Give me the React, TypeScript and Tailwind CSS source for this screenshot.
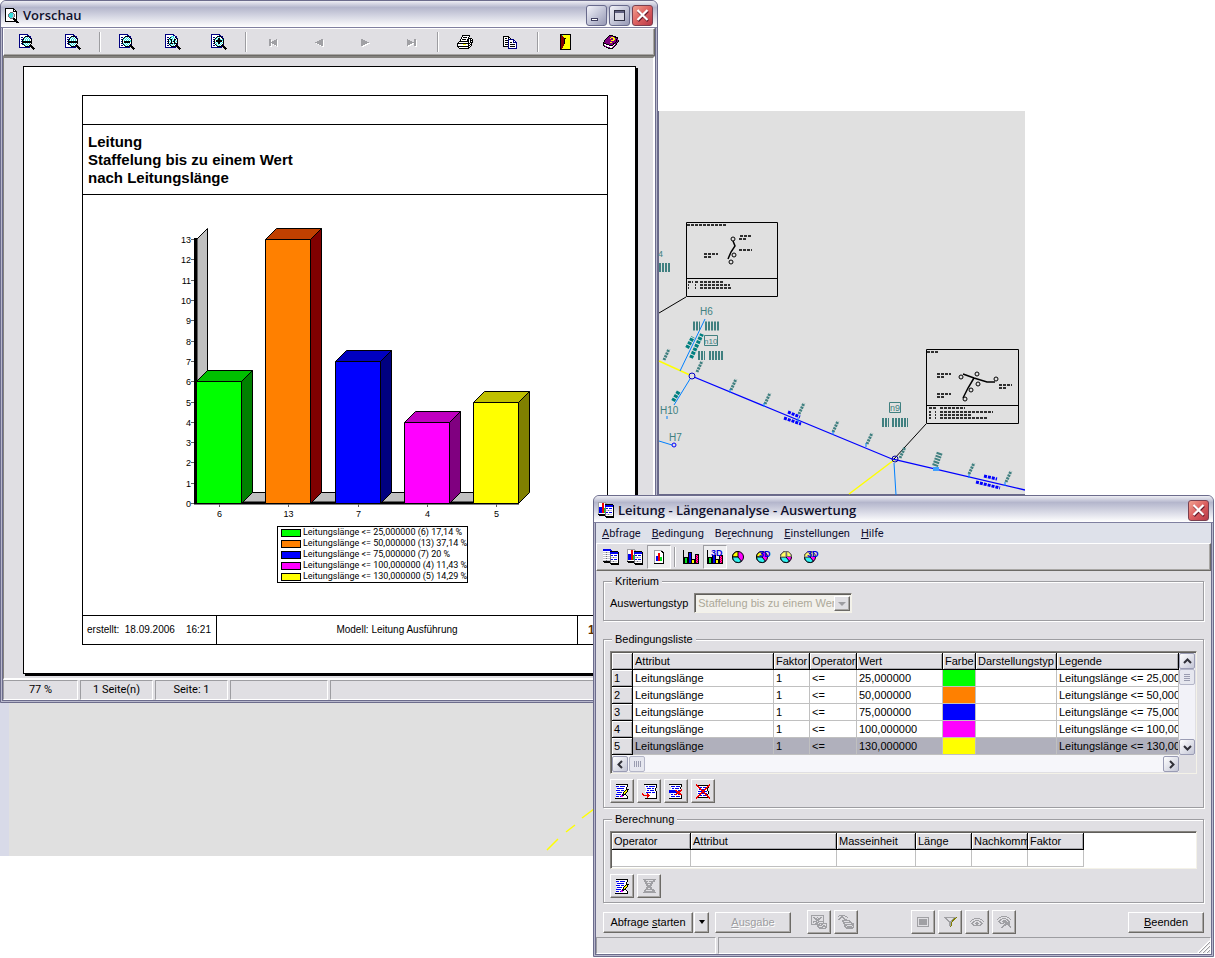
import type { ReactNode } from 'react'
import clsx from 'clsx'

const palette: Record<string, string> = {
  k: '#000000', w: '#ffffff', B: '#000080', b: '#0000f0', c: '#30e0e0', g: '#a0a0a4', G: '#00e020',
  r: '#f00000', R: '#800000', y: '#ffff00', m: '#ff00ff', p: '#800080', s: '#c8c8d0', o: '#808000', d: '#707078',
}

// Bitmap icons, one character per pixel
const icons = {
  zoomOut: [
    'BBBBBBBBB.......', 'BwwwwwwwBB......', 'BwwwwwkkkkBB....', 'BwBBwkcwcwkB....', 'BwwwkcwcwcwkB...', 'BwBBkwcwcwcwk...',
    'BwwkcwcwcwcwK...', 'BwBkkkkkkkkkk...', 'BwwkkkkkkkkkK...', 'BwBkcwcwcwcwk...', 'BwwBkcwcwcwk....', 'BwwwwkcwcwkkK...',
    'BwwwwwkkkkBkkk..', 'BBBBBBBBBBB.kkk.', '.............kkk', '..............k.',
  ],
  zoomOutSmall: [
    'BBBBBBBBB.......', 'BwwwwwwwBB......', 'BwwwwwkkkkBB....', 'BwBBwkcwcwkB....', 'BwwwkcwcwcwkB...', 'BwBkcwcwcwcwk...',
    'BwwkwcwcwcwcK...', 'BwBkwkkkkkkcK...', 'BwwkwkkkkkkwK...', 'BwBkcwcwcwcwk...', 'BwwwkcwcwcwkB...', 'BwBBwkcwcwkkK...',
    'BwwwwwkkkkBkkk..', 'BBBBBBBBBBB.kkk.', '.............kkk', '..............k.',
  ],
  zoomFull: [
    'BBBBBBBBB.......', 'BwwwwwwwBB......', 'BwwwwwcccwBB....', 'BwBBwkcwcwkB....', 'BwwwkcwcwcwkB...', 'BwBkckkcwkkwk...',
    'BwwkwckwckcwK...', 'BwBkcwkckkwcK...', 'BwwkwckwwkcwK...', 'BwBkckkkckkkk...', 'BwwwkcwcwcwkB...', 'BwBBwkcwcwkkK...',
    'BwwwwwkkkkBkkk..', 'BBBBBBBBBBB.kkk.', '.............kkk', '..............k.',
  ],
  zoomIn: [
    'BBBBBBBBB.......', 'BwwwwwwwBB......', 'BwwwwwkkkkBB....', 'BwBBwkcwcwkB....', 'BwwwkcwkkwwkB...', 'BwBkcwckkcwck...',
    'BwwkwkkkkkkcK...', 'BwBkwkkkkkkwK...', 'BwwkcwckkcwcK...', 'BwBkwcwkkwcwk...', 'BwwwkcwcwcwkB...', 'BwBBwkcwcwkkK...',
    'BwwwwwkkkkBkkk..', 'BBBBBBBBBBB.kkk.', '.............kkk', '..............k.',
  ],
  preview: [
    'kkkkkkkkk.....', 'kwwwwwwwkk....', 'kwwwwwwwkwk...', 'kwwwwwwwkkkk..', 'kwwwwdddwwwk..', 'kwwwdcccdwwk..',
    'kwwdccccsdwk..', 'kwwdccccsdwk..', 'kwwdccccsdwk..', 'kwwwdccsdwwk..', 'kwwwwdddkkwk..', 'kwwwwwwwkkkk..',
    'kwwwwwwwwkkk..', 'kkkkkkkkkkkkk.', '...........kkk',
  ],
  first: ['gg.....g', 'gg...ggg', 'gg.ggggg', 'gggggggg', 'gg.ggggg', 'gg...ggg', 'gg.....g'],
  prev: ['......gg', '....gggg', '..gggggg', 'gggggggg', '..gggggg', '....gggg', '......gg'],
  next: ['gg......', 'gggg....', 'gggggg..', 'gggggggg', 'gggggg..', 'gggg....', 'gg......'],
  last: ['g......gg', 'ggg....gg', 'ggggg..gg', 'ggggggggg', 'ggggg..gg', 'ggg....gg', 'g......gg'],
  print: [
    '.....kkkkkkkk...', '.....kwwwwwwk...', '....kwkkkkwk....', '....kwwwwwwkkkk.', '...kwkkkkwkkwkwk', '...kwwwwwwkkwkkk',
    '..kkkkkkkkkkwkwk', '.kwwwwwwwwwkwkkk', 'kkkkkkkkkkkkkwk.', 'kwwwwwyyywwkwkk.', 'kwwwwwwwwwwkkwk.', 'kkkkkkkkkkkkwk..',
    '.kwwwwwwwwwkk...', '..kkkkkkkkkk....',
  ],
  copy: [
    'kkkkkk..........', 'kwwwwkk.........', 'kwkkwkwk........', 'kwwwwBBBBBB.....', 'kwkkkBwwwwBB....', 'kwwwwBwwwwBwB...',
    'kwkkkBwkkwBBBB..', 'kwwwwBwwwwwwwB..', 'kwkkkBwkkkkkwB..', 'kwwwwBwwwwwwwB..', 'kkkkkBwkkkkkwB..', '.....BwwwwwwwB..', '.....BBBBBBBBB..',
  ],
  door: [
    'kkkkkkkkkkk', 'kRcyyyyyyyk', 'kRRyyyyyyyk', 'kRRRyyyyyyk', 'kRRRkkyyyyk', 'kRRRkyyyyyk', 'kRRRkyyyyyk', 'kRRRkyyyyyk',
    'kRRRkyyyyyk', 'kRRRkyyyyyk', 'kRRRyyyyyyk', 'kRRRyyyyyyk', 'kRRyyyyyyyk', 'kRRyyyyyyyk', 'kRyyyyyyyyk', 'kkkkkkkkkkk',
  ],
  book: [
    '......kkkk......', '.....kppppkkk...', '....kpppyyypkkk.', '...kpppyppyyppk.', '..kpppppppyypkp.', '.kppppppyyyppkpk',
    '.kpppppppppppkpk', 'kppppppyypppkpk.', 'kkkpppppppkkpk..', 'kwwkkkppppkwpk..', 'kpwwwwkkkkwpk...', '.kppwwwwwwpk....',
    '...kkppwwpk.....', '.....kkkkk......',
  ],
  tables: [
    'bbbbbbbb........', 'bbbbbbbbb.......', 'wwwwwwwkkkkkkkk.', 'sssdsssbbbbbbbbk', 'wwwwwwwbbbbbbbbk', 'sssdsssdwwwwwwwk', 'wwwwwwwdbbwbbbwk',
    'sssdsssdwwwwwwwk', 'wwwwwwwdssdssswk', 'sssdsssdwwwwwwwk', 'wwwwwwwdbbwbbbwk', 'sssdsssdwwwwwwwk', 'kkkkkkkdssdssswk', '.kkkkkkdwwwwwwwk', '.......kkkkkkkkk', '........kkkkkkkk',
  ],
  chartTable: [
    'gggggggg........', 'gwwwrrwgg.......', 'gwwwrrwkkkkkkkk.', 'gwwwrrwbbbbbbbbk', 'gwwwrrwbbbbbbbbk', 'gbbbrrwdwwwwwwwk', 'gbbbrrGdbbwbbbwk',
    'gbbbrrGdwwwwwwwk', 'gbbbrrGdssdssswk', 'gbbbrrGdwwwwwwwk', 'gbbbrrGdbbwbbbwk', 'gwwwwwwdwwwwwwwk', 'kkkkkkkdssdssswk', '.kkkkkkdwwwwwwwk', '.......kkkkkkkkk', '........kkkkkkkk',
  ],
  chartPage: [
    'gggggggg..', 'gwwwwwwkk.', 'gwwwwwwwkk', 'gwwwrrwwwk', 'gwwwrrwwwk', 'gwwwrrwwwk', 'gwbbrrwwwk', 'gwbbrrGGwk', 'gwbbrrGGwk',
    'gwbbrrGGwk', 'gwbbrrGGwk', 'gwwwwwwwwk', 'gwwwwwwwwk', 'kkkkkkkkkk',
  ],
  bars: [
    'k...............', 'k...............', 'k....kkkk.......', 'k....kbbk.......', 'k....kbbk...kkkk', 'k....kbbk...kmrk', 'k....kbbk...krmk',
    'kkkkkkbbk...kmrk', 'kkGGkkbbk...krmk', 'kkGGkkbbkkkkkmrk', 'kkGGkkbbkyykkrmk', 'kkGGkkbbkyykkmrk', 'kkGGkkbbkyykkrmk', 'kkkkkkkkkkkkkkkk',
  ],
  barsLow: [
    'k...............', 'k...............', 'k...............', 'k...............', 'k...............', 'k....kkkk...kkkk', 'k....kbbk...kmrk',
    'kkkkkkbbk...krmk', 'kkGGkkbbk...kmrk', 'kkGGkkbbkkkkkrmk', 'kkGGkkbbkyykkmrk', 'kkGGkkbbkyykkrmk', 'kkGGkkbbkyykkmrk', 'kkkkkkkkkkkkkkkk',
  ],
  edit: [
    '.kkkkkkkkkkkk.', '.wwwwwwwwwwwk.', '.bbbwbbbbbwwk.', '..wwwwwwwwwk..', '..bbbbbbbwwk..', '.wwwwwwwwwwkkk', '.bbbbwbbbwkyk.', '.wwwwwwwwkyyk.',
    '..bbbbbwkyyk..', '..wwwwwwkyk...', '.bbbbbwkBkk...', '.wwwwwmBkwwk..', '.bbbwbmmwwwwk.', '.wwwwwwwwwwwk.', 'kkkkkkkkkkkkk.',
  ],
  insert: [
    '..kkkkkkkkkkkkk', '...wwwwwwwwwwwk', '...wbbwbbbbbbwk', '...wwwwwwwwwwwk', '....wbbbbwbbwk.', '....wwwwwwwwwk.', '....wbbwbbbbwk.', '...wwwwwwwwwwwk',
    '...wbbbbbwbbbwk', 'r....rwwwwwwwwk', 'rr...rrwwwwwwwk', '.rrrrrrrwwwwwwk', '.....rrwwwwwwwk', '.....rwwwwwwwwk', '...kkkkkkkkkkkk',
  ],
  removeRow: [
    'kkkkkkkkkkkkk.', '.wwwwwwwwwwwk.', '.wbbbbwbbbbwk.', '..wwwwwwwwwk..', '..wbbwbbbbwk..', '.wwwwwwwwwwwr.', 'bbbbbbrrwbbrr.', 'bbbbbbbrrrrr..', 'bbbbbbbbrrr...',
    '..wwwwwrrrrr..', '.wbbwbrrwbrrr.', '.wwwwwwwwwwwk.', '.wbbbbwbbbbwk.', '.wwwwwwwwwwwk.', 'kkkkkkkkkkkkk.',
  ],
  removeAll: [
    'r............r', 'rrkkkkkkkkkkrr', '.rrwwwwwwwwrr.', '.wrrbbwbbbrrk.', '..wrrwwwwrrk..', '..wbrrbbrrwk..', '..wwwrrrrwwk..', '.wbbbbrrbbbwk.',
    '.wwwwrrrrwwwk.', '.wbbrrbbrrbwk.', '..wrrwwwwrrk..', '..rrbbwbbbrr..', '.rrwwwwwwwwrr.', 'rrkkkkkkkkkkrr', 'r............r',
  ],
  removeOff: [
    'ggggggggggggg', '.gg.......gg.', '.gggg.gggggg.', '..gg....gg...', '..gggggggg...', '...gg..gg....', '...gggggg....', '....gggg.....',
    '...gggggg....', '...gg..gg....', '..ggggggggg..', '.gg......ggg.', '.ggggggggggg.', 'ggggggggggggg',
  ],
  exportOff: [
    'ggggggggggggg...', 'g...........g...', 'g.gg..g..gg.g...', 'g..ggg.ggg..g...', 'g...ggggg...g...', 'g....ggg....g...', 'g.gggg.gggggg...', 'g.g..ggg....g...',
    'g...ggg.gggggggg', 'ggggggggg.gg...g', '......ggggg.gg.g', '......gg...ggggg', '.......ggggg..gg', '........ggggggg.',
  ],
  printOff: [
    '.gggggg.........', 'g..gg..gg.......', '..gggg...g......', '.gg..gg.........', 'gg....ggg.......', '....gggggggg....', '....gg.....gg...', '.....ggggggggg..',
    '.....gg......ggg', '......gggggggggg', '......ggg.....gg', '......gg.ggggg.g', '.......ggggggggg', '........ggggggg.',
  ],
  box: [
    'gggggggggggg', 'g..........g', 'g.gggggggg.g', 'g.gggggggg.g', 'g.gggggggg.g', 'g.gggggggg.g', 'g.gggggggg.g', 'g.gggggggg.g', 'g..........g', 'gggggggggggg',
  ],
  filter: [
    'ggggggggggggo', '.gg......goo.', '..gg....goo..', '...gg..goo...', '....ggggo....', '.....ggo.....', '.....ggo.....', '.....ggo.....', '.....ggo.....', '......o......',
  ],
  eye: [
    '....gggggg....', '..gg......gg..', '.g...gggg...g.', 'g..gg....gg..g', '..gg..gg..gg..', '.gg..gggg..gg.', '..gg..gg..gg..', '...gggggggg...',
  ],
  eyeOff: [
    '....gggggg....', '..gg......gg..', '.g...gggg...g.', 'g..gg....gg..g', '..gg..ggg.gg..', '.gg..ggggg.gg.', '..gg..ggggggg.', '...gggg.ggggg.',
    '.......gggggg.', '......ggg..gg.', '.....gg.....gg', '....gg.......g',
  ],
}

type IconName = keyof typeof icons

function Pixels({ name }: { name: IconName }) {
  const rows = icons[name]
  const width = Math.max(...rows.map((r) => r.length))
  return (
    <svg width={width} height={rows.length} shapeRendering="crispEdges" className="shrink-0" aria-hidden="true">
      {rows.flatMap((row, y) =>
        [...row].map((ch, x) =>
          ch === '.' ? null : <rect key={`${x}-${y}`} x={x} y={y} width={1} height={1} fill={palette[ch] ?? '#000'} />,
        ),
      )}
    </svg>
  )
}

function Pie({ label, gap }: { label?: string; gap?: boolean }) {
  return (
    <svg width={16} height={16} viewBox="0 0 16 16" aria-hidden="true">
      <circle cx={7} cy={8} r={5.5} fill="#ff00ff" stroke="#000" />
      <path d="M7 8 V2.5 A5.5 5.5 0 0 0 1.5 8 Z" fill="#ffff00" stroke="#000" />
      <path d="M7 8 H1.5 A5.5 5.5 0 0 0 10.5 12.3 Z" fill="#30f0f0" stroke="#000" />
      {gap && <path d="M7 8 V2.5 A5.5 5.5 0 0 0 1.5 8 Z M7.5 2.5 A5.5 5.5 0 0 1 12.3 7.5 L8 7.5 Z" fill="#ffff60" stroke="#707070" />}
      {label && <text x={4} y={8} className="fill-[#0000e0] font-['Liberation_Sans',sans-serif] text-[9px] font-bold">{label}</text>}
    </svg>
  )
}

function CaptionButton({ kind }: { kind: 'Minimieren' | 'Maximieren' | 'Schließen' }) {
  const close = kind === 'Schließen'
  return (
    <button
      aria-label={kind}
      className={clsx(
        'flex h-[21px] w-[21px] items-center justify-center rounded-[3px] border',
        close ? 'border-[#7a4050] bg-linear-to-br from-[#f0a090] via-[#dc6060] to-[#b83848]' : 'border-[#686a8c] bg-linear-to-br from-[#f4f4fa] via-[#c4c6d8] to-[#9698b4]',
      )}
    >
      <svg width={15} height={15} viewBox="0 0 15 15" shapeRendering={close ? 'auto' : 'crispEdges'}>
        {kind === 'Minimieren' && <rect x={2.5} y={10.5} width={6} height={2} fill="#fff" stroke="#404060" />}
        {kind === 'Maximieren' && (
          <>
            <rect x={2.5} y={2.5} width={10} height={10} fill="#d8d8e4" stroke="#303044" />
            <rect x={3} y={3} width={9} height={2} fill="#606080" />
          </>
        )}
        {close && (
          <>
            <path d="M3 3 L13 13 M13 3 L3 13" stroke="#601828" strokeWidth={2.5} />
            <path d="M2.5 2 L12.5 12 M12.5 2 L2.5 12" stroke="#fff" strokeWidth={2.2} />
          </>
        )}
      </svg>
    </button>
  )
}

function Window({ title, icon, controls, className, children }: {
  title: string
  icon: IconName
  controls: ReactNode
  className: string
  children: ReactNode
}) {
  return (
    <section className={clsx('absolute rounded-t-[6px] border border-[#6c6c8c] bg-[#b8b8cc]', className)}>
      <header className="flex h-[27px] items-center gap-1 rounded-t-[5px] border-b border-[#8080a0] bg-linear-to-b from-[#eeeef4] via-[#b4b6cc] via-25% to-white pt-0.5 pr-1 pl-1">
        <Pixels name={icon} />
        <h1 className="flex-1 font-['Open_Sans',sans-serif] text-[13px] leading-4 font-semibold text-[#10102c]">{title}</h1>
        <div className="flex gap-0.5">{controls}</div>
      </header>
      <div className="mx-px mb-px border-x border-b border-[#6c6c8c] bg-[#e0dfe3]">{children}</div>
    </section>
  )
}

const raised = 'border border-t-white border-l-white border-r-[#6c6a66] border-b-[#6c6a66] shadow-[inset_-1px_-1px_0_#a8a6a4]'

function PreviewTool({ label, icon, disabled }: { label: string; icon: IconName; disabled?: boolean }) {
  return (
    <button aria-label={label} disabled={disabled} className={clsx('flex h-6 w-[46px] items-center justify-center', disabled && 'drop-shadow-[1px_1px_0_#fff]')}>
      <Pixels name={icon} />
    </button>
  )
}

const Separator = () => <div className="mx-[3px] h-5 w-0.5 border-l border-[#9d9da1] bg-white" />

const chartBars = [
  { value: 6, x: 26.5, front: '#00ff00', top: '#00c000', side: '#008000', legend: 'Leitungslänge <= 25,000000 (6) 17,14 %' },
  { value: 13, x: 95.5, front: '#ff8000', top: '#c04000', side: '#800000', legend: 'Leitungslänge <= 50,000000 (13) 37,14 %' },
  { value: 7, x: 165.5, front: '#0000ff', top: '#0000c0', side: '#000080', legend: 'Leitungslänge <= 75,000000 (7) 20 %' },
  { value: 4, x: 234.5, front: '#ff00ff', top: '#c000c0', side: '#800080', legend: 'Leitungslänge <= 100,000000 (4) 11,43 %' },
  { value: 5, x: 303.5, front: '#ffff00', top: '#c0c000', side: '#808000', legend: 'Leitungslänge <= 130,000000 (5) 14,29 %' },
]

const chartY = (value: number) => Math.round(288 - value * 20.3) + 0.5

function BarChart() {
  return (
    <svg width={370} height={311} viewBox="0 0 370 311" className="font-['Liberation_Sans',sans-serif] text-[9px]" role="img" aria-label="Staffelung nach Leitungslänge">
      <path d="M27 24 L37.5 13.5 V277.5 L27 288 Z" fill="#c0c0c0" stroke="#000" />
      <path d="M27 288 L37.5 277.5 H359 L348 288 Z" fill="#c0c0c0" stroke="#000" />
      <path d="M25.5 23 V289 M24 288 H349" fill="none" stroke="#000" strokeWidth={3} />
      {Array.from({ length: 14 }).map((_, i) => (
        <g key={i}>
          <path d={`M21 ${chartY(i)} H24`} stroke="#606060" />
          <text x={21} y={chartY(i) + 3} textAnchor="end">{i}</text>
        </g>
      ))}
      {chartBars.map((bar) => {
        const y = chartY(bar.value)
        return (
          <g key={bar.value} stroke="#000">
            <path d={`M${bar.x} ${y} l11 -11 h45 l-11 11 Z`} fill={bar.top} />
            <path d={`M${bar.x + 45} ${y} l11 -11 V277.5 L${bar.x + 45} 288.5 Z`} fill={bar.side} />
            <path d={`M${bar.x} ${y} h45 V288.5 h-45 Z`} fill={bar.front} />
            <path d={`M${bar.x + 23} 289 v3`} stroke="#606060" />
            <text x={bar.x + 23} y={302} textAnchor="middle" stroke="none">{bar.value}</text>
          </g>
        )
      })}
    </svg>
  )
}

function Report() {
  return (
    <article className="mr-[17px] ml-[19px] border border-black bg-white pt-7 pr-[27px] pb-7 pl-[58px] font-['Liberation_Sans',sans-serif] text-black shadow-[2px_2px_0_#000]">
      <div className="border border-black">
        <div className="h-[29px] border-b border-black" />
        <h2 className="border-b border-black pt-2 pb-[7px] pl-[5px] text-[15px] leading-[18px] font-bold">
          Leitung<br />Staffelung bis zu einem Wert<br />nach Leitungslänge
        </h2>
        <div className="pt-5 pb-8 pl-[87px]">
          <BarChart />
          <ul className="ml-[107px] w-[191px] border border-black pl-[3px] font-[Roboto,sans-serif] text-[9px] leading-[11px] whitespace-nowrap">
            {chartBars.map((bar) => (
              <li key={bar.value} className="flex items-center gap-0.5">
                <span className="h-2 w-5 shrink-0 border border-black" style={{ backgroundColor: bar.front }} />
                {bar.legend}
              </li>
            ))}
          </ul>
        </div>
        <div className="flex h-[29px] border-t border-black text-[10px] leading-7">
          <div className="w-[134px] border-r border-black pl-1 whitespace-pre">erstellt:  18.09.2006    16:21</div>
          <div className="flex-1 text-center">Modell: Leitung Ausführung</div>
          <div className="w-[30px] border-l border-black pl-2.5 text-[12px] font-bold text-[#603000]">1</div>
        </div>
      </div>
    </article>
  )
}

const statusCell = 'border border-t-[#9d9da1] border-l-[#9d9da1] border-r-white border-b-white text-center'

function PreviewWindow() {
  return (
    <Window
      title="Vorschau"
      icon="preview"
      className="top-0 right-[557px] left-0 min-w-[658px]"
      controls={<><CaptionButton kind="Minimieren" /><CaptionButton kind="Maximieren" /><CaptionButton kind="Schließen" /></>}
    >
      <div className={clsx('flex h-7 items-center', raised)}>
        <PreviewTool label="Ganze Seite" icon="zoomOut" />
        <PreviewTool label="Seitenbreite" icon="zoomOut" />
        <Separator />
        <PreviewTool label="Verkleinern" icon="zoomOutSmall" />
        <PreviewTool label="Originalgröße" icon="zoomFull" />
        <PreviewTool label="Vergrößern" icon="zoomIn" />
        <Separator />
        <PreviewTool label="Erste Seite" icon="first" disabled />
        <PreviewTool label="Vorige Seite" icon="prev" disabled />
        <PreviewTool label="Nächste Seite" icon="next" disabled />
        <PreviewTool label="Letzte Seite" icon="last" disabled />
        <Separator />
        <PreviewTool label="Drucken" icon="print" />
        <PreviewTool label="Kopieren" icon="copy" />
        <Separator />
        <PreviewTool label="Beenden" icon="door" />
        <PreviewTool label="Hilfe" icon="book" />
      </div>
      <div className="border-t-2 border-r-2 border-b-2 border-l border-t-[#84827e] border-r-white border-b-white border-l-[#84827e] pt-2 pb-1">
        <Report />
      </div>
      <footer className="flex h-5 gap-0.5 font-[Roboto,sans-serif] text-[11px] leading-[18px]">
        <div className={clsx('w-[75px]', statusCell)}>77 %</div>
        <div className={clsx('w-[73px]', statusCell)}>1 Seite(n)</div>
        <div className={clsx('w-[73px]', statusCell)}>Seite: 1</div>
        <div className={clsx('w-[98px]', statusCell)} />
        <div className={clsx('flex-1', statusCell)} />
      </footer>
    </Window>
  )
}

const stationMarks = [
  [664, 358], [697, 370], [731, 388], [765, 402], [799, 412], [833, 430], [867, 442], [900, 456], [969, 472], [1006, 480],
]

function NetworkMap() {
  return (
    <svg viewBox="0 111 1025 745" width={1025} height={745} className="font-['Liberation_Sans',sans-serif]" role="img" aria-label="Leitungsnetz">
      <path d="M0 700 H9 V856 H0 Z" fill="#d8dae8" />
      <path d="M658 111 V495" stroke="#686888" strokeWidth={2} />
      <path d="M658 494.5 H1025" stroke="#686888" />
      <g fill="none">
        <path d="M659 361 L692 376 M894 460 L849 494 M547 850 L558 839 M566 832 L575 825 M582 818 L594 809" stroke="#ffff00" strokeWidth={1.5} />
        <path d="M705 319 L680 371 M690 379 L674 405 M659 441 L672 445 M894 463 L896 495 M667 416 v3" stroke="#0080ff" />
        <path d="M694 377 L892 459 L1025 490" stroke="#0000ff" strokeWidth={1.3} />
        <path d="M659 313 L686 297 M894 459 L926 424" stroke="#000" />
        <path d="M788 412 l12 5 M784 418 l17 6" stroke="#0000ff" strokeWidth={3} strokeDasharray="3 1" />
        <path d="M984 476 l13 3 M976 482 l24 6" stroke="#0000ff" strokeWidth={3} strokeDasharray="3 1" />
        <path d="M687 348 L693 337 M691 358 L702 334 M673 401 L679 391" stroke="#008080" strokeWidth={4} strokeDasharray="3 1" />
        <path d="M935 466 L940 452" stroke="#408080" strokeWidth={6} strokeDasharray="2 1" />
        {stationMarks.map(([x, y]) => (
          <path key={x} d={`M${x} ${y + 2} l5 -11`} stroke="#408080" strokeWidth={3} strokeDasharray="2 1" />
        ))}
        <path d="M730 389 v4 M764 403 v4 M798 418 v4 M833 431 v4 M866 443 v4 M969 474 v4 M1005 482 v4" stroke="#0080ff" />
        <g stroke="#408080" strokeWidth={9} strokeDasharray="2 1">
          <path d="M659 267.500 H671" />
          <path d="M693 326 H700 M705 326 H719 M698 355.500 H705 M709 355.500 H724" />
          <path d="M882 422.500 H889 M892 422.500 H908" />
        </g>
        <path d="M704.500 335.500 h13 v10 h-13 Z M889.500 402.500 h11 v10 h-11 Z" stroke="#408080" />
        <circle cx={692} cy={376} r={3} stroke="#0000c0" fill="#e0e0e0" />
        <circle cx={674} cy={445} r={2} stroke="#0000ff" />
        <circle cx={895} cy={459} r={3} stroke="#0000a0" />
        <rect x={933} y={467} width={6} height={4} fill="#40a0ff" />
      </g>
      <g className="fill-[#408080] text-[10px]">
        <text x={700} y={315}>H6</text>
        <text x={660} y={414}>H10</text>
        <text x={669} y={441}>H7</text>
        <text x={704} y={344} className="text-[8px]">n10</text>
        <text x={890} y={411} className="text-[9px]">n9</text>
        <text x={658} y={257} className="text-[9px]">4</text>
      </g>
      <g fill="none" stroke="#000">
        <path d="M686.500 222.500 h91 v74 h-91 Z M686.500 278.500 h91" />
        <path d="M733 241 L735 246 L731 252 L728 259" strokeWidth={1.5} />
        <circle cx={733} cy={239} r={2} />
        <circle cx={734} cy={255} r={2} />
        <circle cx={731} cy={262} r={2} />
        <path d="M926.500 349.500 h92 v74 h-92 Z M926.500 405.500 h92" />
        <path d="M963 374 L974 378 L987 382 L995 382 M974 378 L968 388 L963 398" strokeWidth={1.5} />
        <circle cx={961} cy={377} r={2} />
        <circle cx={977} cy={374} r={2} />
        <circle cx={978} cy={384} r={2} />
        <circle cx={996} cy={379} r={2} />
        <circle cx={971} cy={390} r={2} />
        <circle cx={965} cy={399} r={2} />
        <g strokeWidth={2} strokeDasharray="3 1" stroke="#303030">
          <path d="M687 225 h39 M740 236 h12 M739 239 h8 M739 250 h13 M704 254 h14 M704 257 h7" />
          <path d="M688 282 h5 M695 282 h3 M700 282 h24 M688 285 h1 M695 285 h1 M700 285 h30 M688 288 h1 M695 288 h1 M700 288 h31" />
          <path d="M927 352 h12 M937 374 h14 M937 377 h7 M937 394 h14 M937 397 h7 M999 385 h13 M999 388 h7" />
          <path d="M929 408 h8 M940 408 h25 M929 412 h2 M935 412 h1 M940 412 h53 M929 415 h2 M935 415 h1 M940 415 h32 M929 418 h2 M935 418 h1 M940 418 h48" />
        </g>
      </g>
    </svg>
  )
}

function ToolButton({ label, active, children }: { label: string; active?: boolean; children: ReactNode }) {
  return (
    <button
      aria-label={label}
      aria-pressed={active}
      className={clsx('flex h-6 w-6 items-center justify-center', active && 'border border-t-[#9d9da1] border-l-[#9d9da1] border-r-white border-b-white bg-[#eeeef0]')}
    >
      {children}
    </button>
  )
}

function IconButton({ label, icon, disabled }: { label: string; icon: IconName; disabled?: boolean }) {
  return (
    <button aria-label={label} disabled={disabled} className={clsx('flex h-6 w-6 items-center justify-center', raised)}>
      <Pixels name={icon} />
    </button>
  )
}

function Group({ title, children }: { title: string; children: ReactNode }) {
  return (
    <fieldset className="min-w-0 border border-[#9d9da1] px-1.5 pb-1 shadow-[1px_1px_0_#fff,inset_1px_1px_0_#fff]">
      <legend className="ml-0.5 bg-[#e0dfe3] px-[3px] leading-[13px]">{title}</legend>
      {children}
    </fieldset>
  )
}

function ScrollButton({ label, d }: { label: string; d: string }) {
  return (
    <button aria-label={label} className="flex h-4 w-4 shrink-0 items-center justify-center rounded-[2px] border border-[#9a9cb4] bg-linear-to-br from-white to-[#c4c6d6]">
      <svg width={9} height={9} viewBox="0 0 9 9"><path d={d} fill="none" stroke="#303038" strokeWidth={2} /></svg>
    </button>
  )
}

const sunken = 'border border-t-[#84827e] border-l-[#84827e] border-r-[#f4f2e8] border-b-[#f4f2e8] shadow-[inset_1px_1px_0_#605e5a]'
const headCell = 'h-[17px] overflow-hidden border-r border-b border-black bg-[#e0dfe3] px-0.5 text-left font-normal shadow-[inset_1px_1px_0_#fff,inset_-1px_-1px_0_#a8a8ac]'
const dataCell = 'h-[17px] overflow-hidden border-r border-b border-[#c0c0c0] px-0.5'

const conditions = [
  { color: '#00ff00', value: '25,000000' },
  { color: '#ff8000', value: '50,000000' },
  { color: '#0000ff', value: '75,000000' },
  { color: '#ff00ff', value: '100,000000' },
  { color: '#ffff00', value: '130,000000' },
]

function ConditionTable() {
  return (
    <div className={clsx('bg-[#e0dfe3] p-px', sunken)}>
      <div className="flex">
        <div className="h-[102px] min-w-0 flex-1 overflow-hidden bg-white">
          <table className="w-full table-fixed border-separate border-spacing-0 leading-4 whitespace-nowrap">
            <colgroup>
              <col className="w-[21px]" /><col className="w-[141px]" /><col className="w-9" /><col className="w-[47px]" />
              <col className="w-[86px]" /><col className="w-[33px]" /><col className="w-[81px]" /><col />
            </colgroup>
            <thead>
              <tr>
                {['', 'Attribut', 'Faktor', 'Operator', 'Wert', 'Farbe', 'Darstellungstyp', 'Legende'].map((h) => (
                  <th key={h} className={headCell}>{h}</th>
                ))}
              </tr>
            </thead>
            <tbody>
              {conditions.map((c, i) => (
                <tr key={c.value} className={i === 4 ? 'bg-[#b0b0bc]' : 'bg-white'}>
                  <th scope="row" className={headCell}>{i + 1}</th>
                  <td className={dataCell}>Leitungslänge</td>
                  <td className={dataCell}>1</td>
                  <td className={dataCell}>&lt;=</td>
                  <td className={dataCell}>{c.value}</td>
                  <td className={dataCell} style={{ backgroundColor: c.color }} />
                  <td className={dataCell} />
                  <td className={dataCell}>{`Leitungslänge <= ${c.value}`}</td>
                </tr>
              ))}
            </tbody>
          </table>
        </div>
        <div className="flex w-4 flex-col justify-between bg-[#f2f2f8]">
          <div>
            <ScrollButton label="Nach oben" d="M1 6 L4.500 2.500 L8 6" />
            <div className="flex h-4 flex-col items-center justify-center gap-px rounded-[2px] border border-[#b4b6c8] bg-[#e6e7ef]">
              {[0, 1, 2, 3].map((i) => <span key={i} className="h-px w-1.5 bg-[#9a9cb0]" />)}
            </div>
          </div>
          <ScrollButton label="Nach unten" d="M1 3 L4.500 6.500 L8 3" />
        </div>
      </div>
      <div className="mr-4 flex h-[17px] items-end justify-between bg-[#f6f6fa]">
        <div className="flex gap-px">
          <ScrollButton label="Nach links" d="M6 1 L2.500 4.500 L6 8" />
          <div className="flex h-4 w-4 items-center justify-center gap-px rounded-[2px] border border-[#b4b6c8] bg-[#e6e7ef]">
            {[0, 1, 2, 3].map((i) => <span key={i} className="h-1.5 w-px bg-[#9a9cb0]" />)}
          </div>
        </div>
        <ScrollButton label="Nach rechts" d="M3 1 L6.500 4.500 L3 8" />
      </div>
    </div>
  )
}

function CalculationTable() {
  return (
    <div className={clsx('bg-white p-px', sunken)}>
      <table className="w-[472px] table-fixed border-separate border-spacing-0 leading-4 whitespace-nowrap">
        <colgroup>
          <col className="w-[79px]" /><col className="w-[146px]" /><col className="w-[79px]" />
          <col className="w-14" /><col className="w-14" /><col className="w-14" />
        </colgroup>
        <thead>
          <tr>
            {['Operator', 'Attribut', 'Masseinheit', 'Länge', 'Nachkomm', 'Faktor'].map((h) => (
              <th key={h} className={headCell}>{h}</th>
            ))}
          </tr>
        </thead>
        <tbody>
          <tr>{[0, 1, 2, 3, 4, 5].map((i) => <td key={i} className={dataCell} />)}</tr>
        </tbody>
      </table>
    </div>
  )
}

function AnalysisWindow() {
  return (
    <Window
      title="Leitung - Längenanalyse - Auswertung"
      icon="chartTable"
      className="top-[495px] right-px left-[593px] min-w-[621px]"
      controls={<CaptionButton kind="Schließen" />}
    >
      <nav className="flex h-5 gap-[11px] bg-[#dee1ea] px-1.5 pt-px font-[Roboto,sans-serif] text-[11px] leading-5 text-[#101030]">
        <button><u>A</u>bfrage</button>
        <button><u>B</u>edingung</button>
        <button>Be<u>r</u>echnung</button>
        <button><u>E</u>instellungen</button>
        <button><u>H</u>ilfe</button>
      </nav>
      <div className={clsx('flex h-7 items-center pl-0.5', raised)}>
        <ToolButton label="Tabelle"><Pixels name="tables" /></ToolButton>
        <ToolButton label="Tabelle und Diagramm"><Pixels name="chartTable" /></ToolButton>
        <ToolButton label="Diagramm" active><Pixels name="chartPage" /></ToolButton>
        <Separator />
        <ToolButton label="Balken"><Pixels name="bars" /></ToolButton>
        <ToolButton label="Balken 3D" active>
          <span className="relative">
            <Pixels name="barsLow" />
            <span className="absolute -top-0.5 left-1 font-['Liberation_Sans',sans-serif] text-[9px] leading-[10px] font-bold text-[#0000e0]">3D</span>
          </span>
        </ToolButton>
        <ToolButton label="Kreis"><Pie /></ToolButton>
        <ToolButton label="Kreis 3D"><Pie label="3D" /></ToolButton>
        <ToolButton label="Ring"><Pie gap /></ToolButton>
        <ToolButton label="Ring 3D"><Pie label="3D" gap /></ToolButton>
      </div>

      <div className="flex flex-col px-[7px] pt-1 font-['Liberation_Sans',sans-serif] text-[11px] text-black">
        <Group title="Kriterium">
          <div className="flex items-center gap-1.5 pt-[5px] pb-[3px]">
            <label htmlFor="auswertungstyp">Auswertungstyp</label>
            <div className={clsx('relative h-5 w-[158px] bg-[#f2f1ec] p-px', sunken)}>
              <select id="auswertungstyp" disabled className="h-4 w-full appearance-none pr-4 pl-0.5 leading-4 text-[#aca899] opacity-100">
                <option>Staffelung bis zu einem Wert</option>
              </select>
              <span className={clsx('pointer-events-none absolute top-0.5 right-px flex h-[15px] w-4 items-center justify-center bg-[#e0dfe3]', raised)}>
                <svg width={8} height={4}><path d="M0 0 H8 L4 4 Z" fill="#9d9da1" /></svg>
              </span>
            </div>
          </div>
        </Group>
        <div className="h-3" />
        <Group title="Bedingungsliste">
          <div className="flex flex-col gap-[5px] pt-[5px]">
            <ConditionTable />
            <div className="flex gap-[3px]">
              <IconButton label="Bedingung bearbeiten" icon="edit" />
              <IconButton label="Bedingung einfügen" icon="insert" />
              <IconButton label="Bedingung löschen" icon="removeRow" />
              <IconButton label="Alle Bedingungen löschen" icon="removeAll" />
            </div>
          </div>
        </Group>
        <div className="h-[5px]" />
        <Group title="Berechnung">
          <div className="flex flex-col gap-[5px] pt-[5px]">
            <CalculationTable />
            <div className="flex gap-[3px]">
              <IconButton label="Berechnung bearbeiten" icon="edit" />
              <IconButton label="Berechnung löschen" icon="removeOff" disabled />
            </div>
          </div>
        </Group>
        <div className="mt-[7px] mb-[3px] flex items-center">
          <button className={clsx('h-[21px] w-[90px]', raised)}>Abfrage <u>s</u>tarten</button>
          <button aria-label="Weitere Abfragen" className={clsx('ml-px flex h-[21px] w-[15px] items-center justify-center', raised)}>
            <svg width={6} height={4}><path d="M0 0 H6 L3 4 Z" /></svg>
          </button>
          <button disabled className={clsx('ml-1.5 h-[21px] w-[76px] text-[#9d9da1] [text-shadow:1px_1px_0_#fff]', raised)}><u>A</u>usgabe</button>
          <div className="ml-4 flex gap-[3px]">
            <IconButton label="Export" icon="exportOff" disabled />
            <IconButton label="Druck" icon="printOff" disabled />
          </div>
          <div className="mr-28 ml-auto flex gap-[3px]">
            <IconButton label="Auswahl" icon="box" disabled />
            <IconButton label="Filter" icon="filter" disabled />
            <IconButton label="Anzeigen" icon="eye" disabled />
            <IconButton label="Ausblenden" icon="eyeOff" disabled />
          </div>
          <button className={clsx('h-[21px] w-[76px]', raised)}><u>B</u>eenden</button>
        </div>
      </div>
      <footer className="flex h-[17px] gap-0.5">
        <div className={clsx('w-[120px]', statusCell)} />
        <div className={clsx('flex flex-1 items-end justify-end', statusCell)}>
          <svg width={13} height={13} viewBox="0 0 13 13">
            <path d="M1 13 L13 1 M5 13 L13 5 M9 13 L13 9" stroke="#fff" strokeWidth={2} />
            <path d="M2 13 L13 2 M6 13 L13 6 M10 13 L13 10" stroke="#9d9da1" />
          </svg>
        </div>
      </footer>
    </Window>
  )
}

export default function App() {
  return (
    <main className="relative min-h-screen overflow-hidden bg-white">
      <div className="absolute top-[111px] right-[190px] left-0 bg-[#e0e0e0]">
        <NetworkMap />
      </div>
      <PreviewWindow />
      <AnalysisWindow />
    </main>
  )
}
